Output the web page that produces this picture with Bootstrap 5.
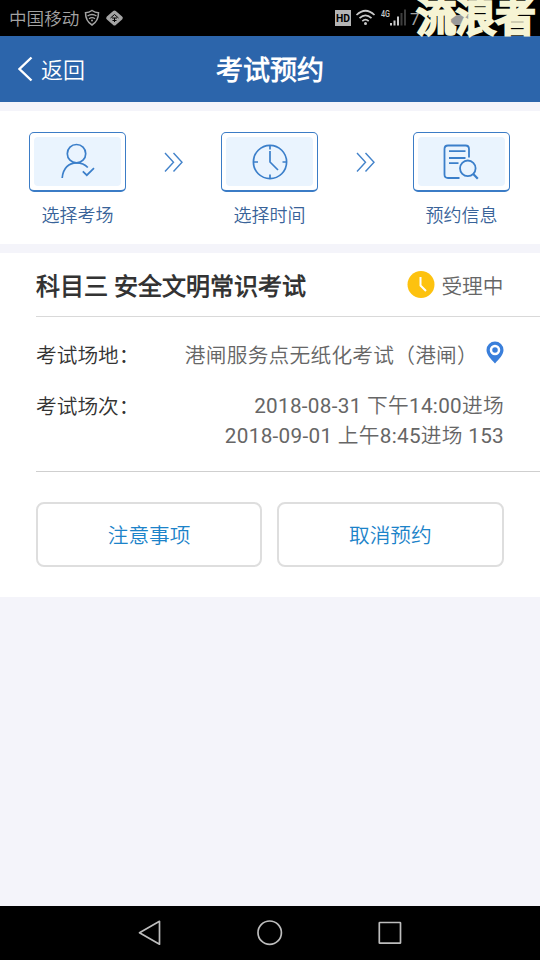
<!DOCTYPE html>
<html lang="zh-CN">
<head>
<meta charset="utf-8">
<meta name="viewport" content="width=device-width, initial-scale=1">
<title>考试预约</title>
<link href="https://cdn.jsdelivr.net/npm/bootstrap@5.3.0/dist/css/bootstrap.min.css" rel="stylesheet">
<style>
  body { font-family: Roboto, "Noto Sans CJK SC DemiLight", "Noto Sans CJK SC", sans-serif; background: #f4f4fa; color: #333; height: 960px; overflow: hidden; }
  svg { display: block; flex: none; }
  .statusbar { height: 36px; background: #000; color: #a3a3a3; font-size: 17.6px; line-height: 34px; padding: 2px 0 0 9px; }
  .signal-icons { margin-left: auto; width: 205px; }
  .net-clock { font-size: 17px; margin-left: 4px; }
  .watermark { top: -1px; left: 416.5px; font-size: 39.6px; line-height: 38px; font-weight: 900; color: #f6f4d4; -webkit-text-stroke: 2.4px #f6f4d4; paint-order: stroke fill; white-space: nowrap; z-index: 2; }
  .topbar { height: 66px; background: #2c65ab; color: #fff; }
  .back-link { font-size: 22px; line-height: 30px; padding-left: 18px; color: #fff; width: 160px; }
  .back-text { padding-top: 3px; }
  .page-title { font-size: 27px; line-height: 36px; font-weight: 700; padding-top: 4px; }
  .steps { height: 133px; margin-top: 9px; padding: 21px 30px 0 29px; }
  .step { width: 97px; color: #396399; font-size: 18px; line-height: 26px; }
  .step-box { height: 60px; padding: 4px; border: 1px solid #3b7cc6; border-bottom-width: 2px; border-radius: 5px; background: #fff; }
  .step-fill { background: #eaf4fe; border-radius: 4px; }
  .step-label { margin-top: 11px; white-space: nowrap; }
  .chevrons { margin-top: 17px; }
  .booking { height: 344px; margin-top: 9px; padding-left: 36px; }
  .booking-head { height: 64px; padding-right: 36.5px; border-bottom: 1px solid #d9d9d9; }
  .booking-title { font-size: 24px; line-height: 36px; font-weight: 700; white-space: nowrap; padding-top: 4px; }
  .state, .info { font-size: 20.7px; line-height: 30px; color: #666; }
  .state-text { padding-top: 4px; }
  .info { height: 155px; border-bottom: 1px solid #cfcfcf; padding: 24px 36px 0 0; }
  .info-name { color: #333; }
  .info-row + .info-row { margin-top: 21px; }
  .place { white-space: nowrap; letter-spacing: .25px; }
  .pin { margin: 0 0 0 8px; }
  .sessions { letter-spacing: .3px; margin-top: -1px; }
  .actions { gap: 15px; padding: 30px 36.5px 0 0; }
  .action { height: 65px; border: 2px solid #dedede; border-radius: 8px; color: #1c83c9; font-size: 20.7px; background: #fff; padding: 5px 0 0; }
  .softkeys { height: 54px; background: #000; }
  .softkeys svg { width: 540px; height: 54px; }
</style>
</head>
<body class="d-flex flex-column position-relative">
  <div class="statusbar d-flex align-items-center">
    <span>中国移动</span>
    <svg class="ms-1" width="42" height="24" viewBox="83 7 42 24" fill="none" stroke="#a3a3a3">
      <path d="M92 10.500Q95 12.600 98.500 12.700Q98.500 21 92 25Q85.500 21 85.500 12.700Q89 12.600 92 10.500Z" stroke-width="1.500"/>
      <path d="M87.500 16Q92 13 96.500 16M89 18.700Q92 16.600 95 18.700" stroke-width="1.300"/>
      <circle cx="92" cy="20.500" r="1" fill="#a3a3a3" stroke="none"/>
      <path d="M114.500 12.500 120.800 18 114.500 23.500 108.200 18Z" fill="#a3a3a3" stroke-width="4" stroke-linejoin="round"/>
      <path d="M110.500 18 114.500 14.500 118.500 18M112 18H117M114.500 18V22M112.500 20.500H116.500" stroke="#000"/>
    </svg>
    <div class="signal-icons d-flex align-items-center">
      <svg width="71" height="30" viewBox="335 4 71 30">
        <rect x="335" y="10" width="16" height="16" fill="#b5b5b5"/>
        <text x="343" y="22.300" text-anchor="middle" font-size="11.500" font-weight="700" font-family="Roboto,sans-serif" fill="#000" textLength="14" lengthAdjust="spacingAndGlyphs">HD</text>
        <g fill="none" stroke="#c9c9c9" stroke-width="1.700">
          <path d="M356.500 15Q365.500 6.500 374.500 15M359.500 18.200Q365.500 12.500 371.500 18.200M362.300 21.200Q365.500 18.200 368.700 21.200"/>
        </g>
        <circle cx="365.500" cy="23.500" r="1.500" fill="#c9c9c9"/>
        <text x="381" y="16.500" font-size="9" font-weight="500" font-family="Roboto,sans-serif" fill="#c9c9c9" textLength="9" lengthAdjust="spacingAndGlyphs">4G</text>
        <path d="M390 23h2v2.500h-2zM393.500 20.500h2v5h-2zM397 16.500h2v9h-2z" fill="#c9c9c9"/>
        <path d="M400.500 13h2v12.500h-2zM404 9.500h2v16h-2z" fill="#3d3d3d"/>
      </svg>
      <span class="net-clock">7</span>
      <svg class="ms-4" width="30" height="16" viewBox="0 0 30 16"><rect x="1" y="4" width="25" height="10" fill="#999"/></svg>
    </div>
  </div>
  <div class="watermark position-absolute">流浪者</div>

  <header class="topbar d-flex align-items-center">
    <a href="#" class="back-link d-flex align-items-center text-decoration-none">
      <svg width="23" height="28" viewBox="0 0 23 28" fill="none" stroke="#fff" stroke-width="2.400"><path d="M13.500 2.500 1.500 14 13.500 25.500"/></svg>
      <span class="back-text">返回</span>
    </a>
    <h1 class="page-title flex-grow-1 text-center mb-0">考试预约</h1>
    <div class="back-link"></div>
  </header>

  <section class="steps bg-white d-flex justify-content-between">
    <div class="step text-center">
      <div class="step-box"><div class="step-fill h-100 d-flex align-items-center justify-content-center">
        <svg width="38" height="38" viewBox="58.500 143 38 38" fill="none" stroke="#3b7fca" stroke-width="1.700">
          <circle cx="76" cy="153.700" r="9.200"/><path d="M61.700 178C62.500 168 68.500 162.800 76 162.800Q83 162.800 87.300 167.500M82.300 171.300 86.300 175.200 93.500 168.200"/>
        </svg>
      </div></div>
      <div class="step-label">选择考场</div>
    </div>
    <svg class="chevrons" width="22" height="26" viewBox="163 149 22 26" fill="none" stroke="#4383ca" stroke-width="1.400"><path d="M165 153 173.500 162.200 165 171.400M173.500 153 182 162.200 173.500 171.400"/></svg>
    <div class="step text-center">
      <div class="step-box"><div class="step-fill h-100 d-flex align-items-center justify-content-center">
        <svg width="38" height="38" viewBox="250.500 143 38 38" fill="none" stroke="#3b7fca" stroke-width="1.700">
          <circle cx="269.500" cy="162" r="16.600"/><path d="M269.500 145.500V149.500M269.500 174.500V178.500M253 162H257.500M282 162H286.500M269.500 151V162L277.500 170"/>
        </svg>
      </div></div>
      <div class="step-label">选择时间</div>
    </div>
    <svg class="chevrons" width="22" height="26" viewBox="163 149 22 26" fill="none" stroke="#4383ca" stroke-width="1.400"><path d="M165 153 173.500 162.200 165 171.400M173.500 153 182 162.200 173.500 171.400"/></svg>
    <div class="step text-center">
      <div class="step-box"><div class="step-fill h-100 d-flex align-items-center justify-content-center">
        <svg width="38" height="38" viewBox="443.500 143 38 38" fill="none" stroke="#3b7fca" stroke-width="1.800">
          <path d="M469.500 157.500V149Q469.500 145.500 466 145.500H448.500Q445 145.500 445 149V174.500Q445 178 448.500 178H460M449.500 151.200H466M449.500 158H466M449.500 163.200H459"/>
          <circle cx="468.300" cy="168.300" r="7.800"/><path d="M473.500 173.800 478.300 178.700" stroke-width="2.200"/>
        </svg>
      </div></div>
      <div class="step-label">预约信息</div>
    </div>
  </section>

  <section class="booking bg-white">
    <div class="booking-head d-flex align-items-center justify-content-between">
      <h2 class="booking-title mb-0">科目三 安全文明常识考试</h2>
      <div class="state d-flex align-items-center">
        <svg width="34" height="28" viewBox="0 0 34 28"><circle cx="14" cy="13.500" r="13.500" fill="#fdc20f"/><path d="M13.500 6V14.500L19 20" fill="none" stroke="#fff" stroke-width="2"/></svg>
        <span class="state-text">受理中</span>
      </div>
    </div>
    <div class="info">
      <div class="info-row d-flex justify-content-between">
        <span class="info-name">考试场地：</span>
        <span class="place d-flex">港闸服务点无纸化考试（港闸）
          <svg class="pin" width="18" height="24" viewBox="0 0 18 24"><path d="M9 .5A8.500 8.500 0 0 0 .5 9C.5 14 5 18 9 22.500 13 18 17.500 14 17.500 9A8.500 8.500 0 0 0 9 .5Z" fill="#3a7fdb"/><circle cx="9" cy="9" r="4" fill="#3a7fdb" stroke="#fff" stroke-width="2.500"/></svg>
        </span>
      </div>
      <div class="info-row d-flex justify-content-between">
        <span class="info-name">考试场次：</span>
        <span class="sessions text-end">2018-08-31 下午14:00进场<br>2018-09-01 上午8:45进场 153</span>
      </div>
    </div>
    <div class="actions d-flex">
      <button type="button" class="action btn flex-fill w-50">注意事项</button>
      <button type="button" class="action btn flex-fill w-50">取消预约</button>
    </div>
  </section>

  <nav class="softkeys mt-auto">
    <svg viewBox="0 906 540 54" fill="none" stroke="#bdbdbd" stroke-width="1.700" stroke-linejoin="round">
      <path d="M159.500 921.300V944.200L139.500 932.700Z"/><circle cx="269.700" cy="932.700" r="11.700"/><rect x="379.300" y="922.500" width="21.200" height="20.700" rx=".5"/>
    </svg>
  </nav>
<script src="https://cdn.jsdelivr.net/npm/bootstrap@5.3.0/dist/js/bootstrap.bundle.min.js"></script>
</body>
</html>
